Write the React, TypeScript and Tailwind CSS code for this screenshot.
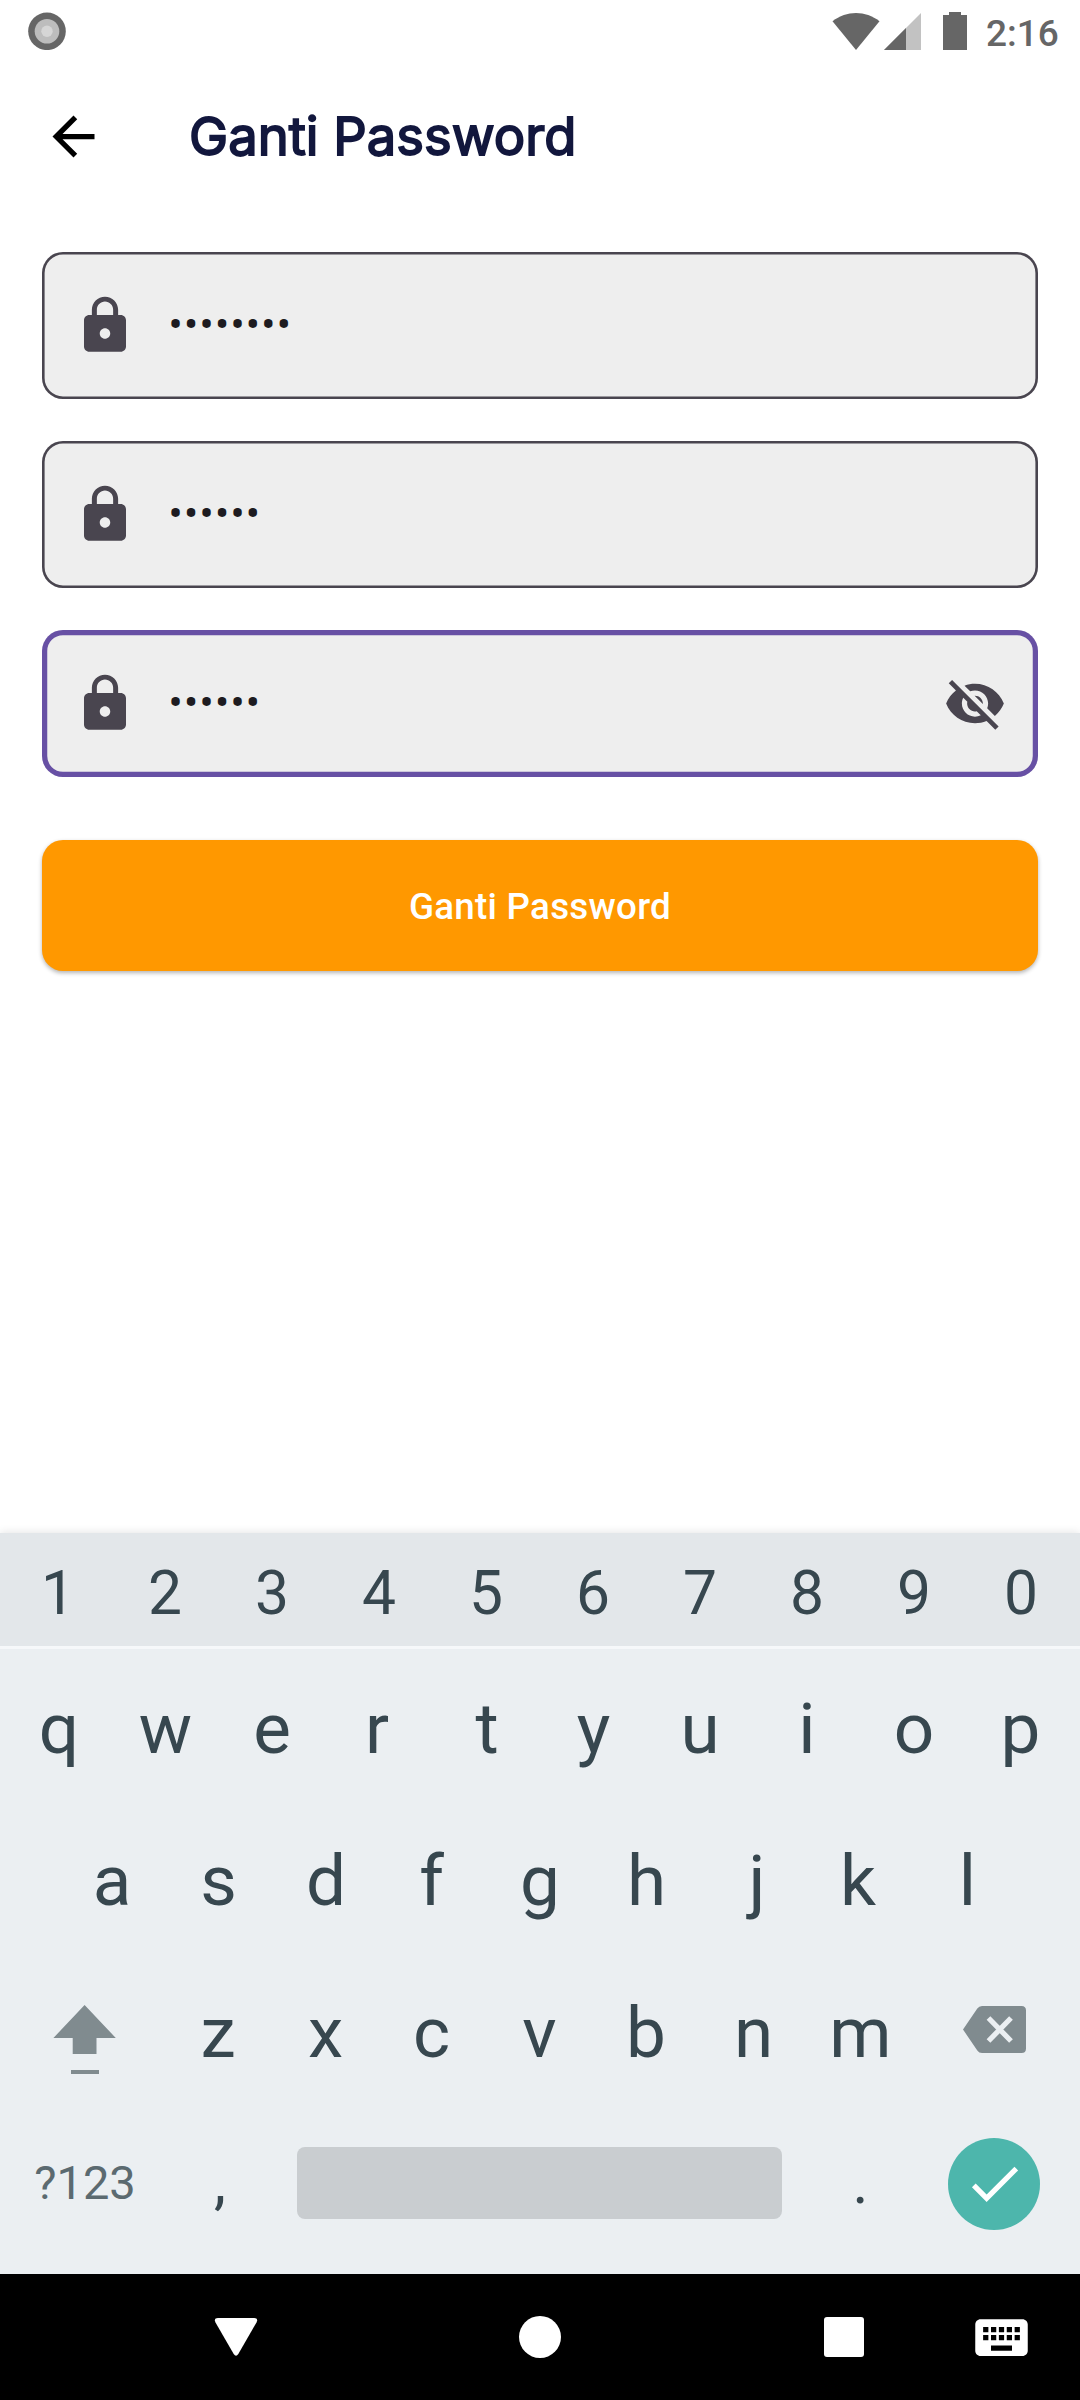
import React from "react";

function StatusBar() {
  return (
    <header className="flex h-[63px] items-start text-[#666666]">
      <svg className="ml-[28px] mt-[12px] h-[38px] w-[38px]" viewBox="0 0 38 38">
        <circle cx="19" cy="19.3" r="18.8" fill="#666666" />
        <circle cx="19" cy="19.3" r="12.3" fill="#bdbdbd" />
        <circle cx="19" cy="19.3" r="5.7" fill="#d6d6d6" />
      </svg>
      <svg className="ml-auto mt-[12px] h-[38px] w-[136px]" viewBox="832 12 136 38">
        <path d="M832.5 21.3C846.5 10.2 865.500 10.200 879.500 21.300L856 50z" fill="#666666" />
        <path d="M884 50L921 13V50z" fill="#c2c2c2" />
        <path d="M884 50L906 28V50z" fill="#666666" />
        <path d="M943 15H949V12H961V15H967V50H943z" fill="#666666" />
      </svg>
      <span className="ml-[18px] mr-[20px] mt-[12px] w-[74px] whitespace-nowrap text-[37px] font-medium leading-[44px]">2:16</span>
    </header>
  );
}

function LockIcon() {
  return (
    <svg className="h-[63px] w-[63px] shrink-0" viewBox="-0.19 0 24 24" fill="#49454f">
      <path d="M18 8h-1V6c0-2.76-2.24-5-5-5S7 3.24 7 6v2H6c-1.1 0-2 .9-2 2v10c0 1.1.9 2 2 2h12c1.1 0 2-.9 2-2V10c0-1.1-.9-2-2-2zm-6 9c-1.100 0-2-.9-2-2s.9-2 2-2 2 .9 2 2-.9 2-2 2zm3.100-9H8.900V6c0-1.710 1.390-3.100 3.100-3.100 1.710 0 3.100 1.390 3.100 3.100v2z" />
    </svg>
  );
}

function EyeOffIcon() {
  return (
    <svg className="ml-auto mr-[32px] h-[63px] w-[63px] shrink-0" viewBox="-0.19 0 24 24" fill="#49454f">
      <path d="M12 7c2.760 0 5 2.240 5 5 0 .65-.13 1.260-.36 1.830l2.920 2.920c1.510-1.260 2.700-2.890 3.430-4.750-1.730-4.390-6-7.500-11-7.500-1.400 0-2.740.25-3.980.7l2.160 2.160C10.740 7.130 11.350 7 12 7zM2 4.270l2.280 2.280.46.46C3.080 8.300 1.780 10.020 1 12c1.730 4.390 6 7.500 11 7.500 1.550 0 3.030-.3 4.380-.84l.42.42L19.730 22 21 20.730 3.270 3 2 4.270zM7.530 9.800l1.550 1.550c-.05.21-.08.43-.08.65 0 1.660 1.340 3 3 3 .22 0 .44-.03.65-.08l1.550 1.550c-.67.33-1.410.53-2.200.53-2.760 0-5-2.240-5-5 0-.79.2-1.530.53-2.200zm4.310-.78l3.150 3.150.02-.16c0-1.660-1.340-3-3-3l-.17.01z" />
    </svg>
  );
}

function PasswordField({ value, focused }: { value: string; focused?: boolean }) {
  return (
    <div
      className={
        focused
          ? "flex h-[147px] items-center rounded-[21px] bg-[#eeeeee] pl-[31px] shadow-[inset_0_0_0_5.25px_#6750a4]"
          : "flex h-[147px] items-center rounded-[21px] bg-[#eeeeee] pl-[31px] shadow-[inset_0_0_0_2.6px_#49454f]"
      }
    >
      <LockIcon />
      <span className="ml-[32.500px] pb-[2px] text-[42px] leading-[63px] tracking-[1.3px] text-[#1d1b20]">{value}</span>
      {focused && <EyeOffIcon />}
    </div>
  );
}

// Padding that centres the drawn shape of a letter with uneven side bearings.
const opticalPadding: Record<string, string> = {
  r: "pr-[4px]",
  k: "pr-[5px]",
  f: "pr-[2px]",
  c: "pr-[2px]",
  z: "pr-[1px]",
  p: "pr-[1px]",
  b: "pr-[1px]",
  q: "pl-[2px]",
  w: "pl-[1px]",
  t: "pl-[2px]",
  y: "pl-[1px]",
  a: "pl-[1px]",
  d: "pl-[1px]",
  g: "pl-[1px]",
  j: "pl-[7px]",
};

function Keys({ chars }: { chars: string }) {
  return (
    <>
      {chars.split("").map((c) => (
        <span key={c} className={`w-[107px] shrink-0 text-center ${opticalPadding[c] ?? ""}`}>
          {c}
        </span>
      ))}
    </>
  );
}

function Keyboard() {
  return (
    <section className="h-[741px] w-full bg-[#ebeff2] text-[#37474f] shadow-[0_-1px_8px_rgba(0,0,0,0.10)]">
      <div className="flex h-[116px] border-b-[3px] border-[#f6f8fa] bg-[#e3e7ea] pl-[4.500px] pt-[4px] text-[60.500px] leading-[114px]">
        <Keys chars="1234567890" />
      </div>
      <div className="flex flex-col pt-[4px] text-[71px] leading-[152px]">
        <div className="flex h-[152px] pl-[4.500px]">
          <Keys chars="qwertyuiop" />
        </div>
        <div className="flex h-[152px] pl-[58px]">
          <Keys chars="asdfghjkl" />
        </div>
        <div className="flex h-[152px]">
          <div className="flex w-[165px] shrink-0 pl-[53px] pt-[48px]">
            <svg className="h-[70px] w-[63px]" viewBox="53 2005 63 70" fill="#808b8f">
              <path d="M84.600 2005L115.800 2038H96.500V2054H72.700V2038H53.400zM71 2070H99V2074H71z" />
            </svg>
          </div>
          <Keys chars="zxcvbnm" />
          <div className="pl-[49px] pt-[49px]">
            <svg className="h-[47px] w-[63px]" viewBox="963 2006 63 47">
              <path d="M982 2006H1021.500Q1026 2006 1026 2010.500V2048.500Q1026 2053 1021.500 2053H982Q979 2053 977.300 2050.500L963 2029.500L977.300 2008.500Q979 2006 982 2006z" fill="#808b8f" />
              <path d="M988.500 2018L1011 2041M1011 2018L988.500 2041" stroke="#ebeff2" strokeWidth="5.200" />
            </svg>
          </div>
        </div>
        <div className="flex h-[148px] items-center">
          <span className="w-[165px] pl-[5px] text-center text-[47px] leading-[146px] text-[#5b6a70]">?123</span>
          <span className="w-[107px] pl-[3px] text-center text-[60.500px] leading-[148px]">,</span>
          <div className="ml-[25px] h-[72px] w-[485px] shrink-0 rounded-[8px] bg-[#c9cdd0]" />
          <span className="ml-[25px] w-[107px] text-center text-[60.500px] leading-[148px]">.</span>
          <div className="ml-[34px] mt-px flex h-[92px] w-[92px] items-center justify-center rounded-full bg-[#4db6ac]">
            <svg className="h-[63px] w-[63px]" viewBox="0 0 24 24" fill="#ffffff">
              <path d="M9 16.170L4.830 12l-1.420 1.410L9 19 21 7l-1.410-1.410z" />
            </svg>
          </div>
        </div>
      </div>
    </section>
  );
}

function NavBar() {
  return (
    <nav className="flex h-[126px] items-center bg-black">
      <svg className="ml-[214px] h-[38px] w-[44px]" viewBox="-0.5 0 44 38" fill="#ffffff">
        <path d="M3.500 0H39.500Q44 0 42 4.500L23.800 36Q21.500 39.500 19.200 36L1 4.500Q-1 0 3.500 0z" />
      </svg>
      <div className="ml-[261px] h-[42px] w-[42px] rounded-full bg-white" />
      <div className="ml-[263px] h-[40px] w-[40px] rounded-[3px] bg-white" />
      <svg className="ml-[105.500px] h-[63px] w-[63px]" viewBox="0 0 24 24" fill="#ffffff">
        <path d="M20 5H4c-1.100 0-1.990.9-1.990 2L2 17c0 1.100.9 2 2 2h16c1.100 0 2-.9 2-2V7c0-1.100-.9-2-2-2zm-9 3h2v2h-2V8zm0 3h2v2h-2v-2zM8 8h2v2H8V8zm0 3h2v2H8v-2zm-1 2H5v-2h2v2zm0-3H5V8h2v2zm9 7H8v-2h8v2zm0-4h-2v-2h2v2zm0-3h-2V8h2v2zm3 3h-2v-2h2v2zm0-3h-2V8h2v2z" />
      </svg>
    </nav>
  );
}

export default function App() {
  return (
    <div className="flex h-[2400px] w-[1080px] flex-col overflow-hidden bg-white font-['Roboto',sans-serif]">
      <StatusBar />
      <div className="flex h-[147px] items-center">
        <svg className="ml-[42px] h-[63px] w-[63px]" viewBox="0 0 24 24" fill="#000000">
          <path d="M20 11H7.830l5.590-5.590L12 4l-8 8 8 8 1.410-1.410L7.830 13H20v-2z" />
        </svg>
        <h1 className="ml-[84px] whitespace-nowrap pb-[2px] font-['Inter',sans-serif] text-[52.500px] font-normal leading-[64px] text-[#12173d] [-webkit-text-stroke:1.800px_#12173d]">Ganti Password</h1>
      </div>
      <main className="flex flex-1 flex-col gap-[42px] px-[42px] pt-[42px]">
        <PasswordField value="••••••••" />
        <PasswordField value="••••••" />
        <PasswordField value="••••••" focused />
        <button className="mt-[21px] h-[131px] rounded-[21px] bg-[#ff9800] pt-[2px] text-[36.750px] font-medium tracking-[0.260px] text-white shadow-[0_2px_4px_rgba(0,0,0,0.30)]">
          Ganti Password
        </button>
      </main>
      <Keyboard />
      <NavBar />
    </div>
  );
}
